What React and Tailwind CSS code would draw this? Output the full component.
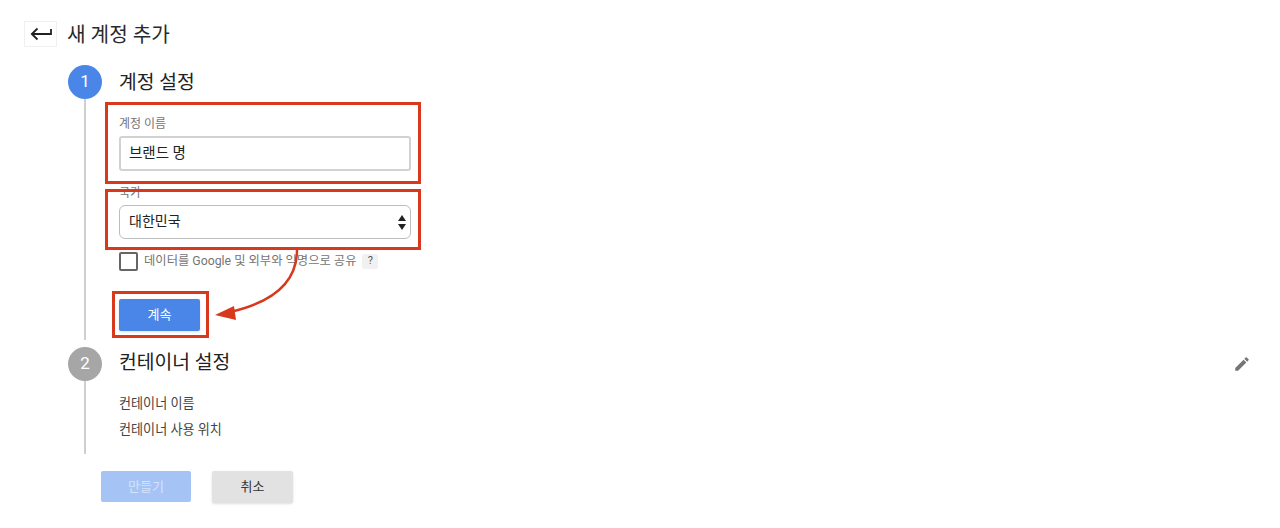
import React from 'react';

const font = "font-['Roboto','Noto_Sans_CJK_KR',sans-serif]";

const Annotations = () => (
  <>
    <div className="absolute left-[105px] top-[102px] w-[316px] h-[82px] border-[3px] border-[#d8391c]" />
    <div className="absolute left-[105px] top-[189px] w-[316px] h-[61px] border-[3px] border-[#d8391c]" />
    <div className="absolute left-[112px] top-[291px] w-[97px] h-[47px] border-[3px] border-[#d8391c]" />
    <svg className="absolute left-[210px] top-[248px]" width="95" height="76" viewBox="0 0 95 76" fill="none">
      <path d="M87 2 C87 34 64 54 20 64" stroke="#d8391c" strokeWidth="2.5" />
      <path d="M5 67 L24 58 L26 72 Z" fill="#d8391c" />
    </svg>
  </>
);

const App = () => (
  <div className={`relative w-[1280px] h-[528px] overflow-hidden bg-white ${font}`}>
    <header className="flex items-center pl-6 pt-[21px] h-[47px]">
      <button className="flex items-center justify-center w-[33px] h-[26px] border border-[#f0f0f0]">
        <svg width="22" height="14" viewBox="0 0 22 14" fill="none" stroke="#222" strokeWidth="1.8">
          <path d="M21 2 V7 H2" />
          <path d="M7.5 1.5 L1.8 7 L7.5 12.5" />
        </svg>
      </button>
      <h1 className="ml-[10px] mt-[2px] text-[20.2px] leading-[26px] text-[#2a2a2a]">새 계정 추가</h1>
    </header>

    <section className="flex pl-[68px] pt-[18px]">
      <div className="flex flex-col items-center w-[34px]">
        <div className="flex items-center justify-center shrink-0 w-[34px] h-[34px] rounded-full bg-[#4a86e8] text-[17px] text-white">1</div>
        <div className="w-[2px] h-[241px] bg-[#cfcfcf]" />
      </div>
      <div className="ml-[17px] w-[292px]">
        <h2 className="h-[34px] text-[19.3px] leading-[36px] text-[#222]">계정 설정</h2>
        <label className="block mt-[16px] text-[12px] leading-[18px] text-[#757575]">계정 이름</label>
        <div className="flex items-center mt-[3px] h-[35px] px-[8px] rounded-[3px] border-2 border-[#d2d2d2] text-[14.5px] text-[#222]">브랜드 명</div>
        <label className="block mt-[13px] text-[12px] leading-[18px] text-[#757575]">국가</label>
        <div className="flex items-center justify-between mt-[3px] h-[34px] pl-[9px] pr-[4px] rounded-[6px] border border-[#bdbdbd] text-[14px] text-[#222]">
          <span className="mb-[2px]">대한민국</span>
          <svg width="8" height="15" viewBox="0 0 8 15" fill="#222">
            <path d="M4 0 L8 6 H0 Z" />
            <path d="M4 15 L8 9 H0 Z" />
          </svg>
        </div>
        <div className="flex items-center mt-[13px] h-[19px]">
          <span className="w-[19px] h-[19px] rounded-[2px] border-2 border-[#666]" />
          <span className="ml-[6px] text-[12.3px] text-[#757575]">데이터를 Google 및 외부와 익명으로 공유</span>
          <span className="flex items-center justify-center ml-[6px] w-[16px] h-[15px] rounded-[2px] bg-[#f1f1f1] text-[11px] text-[#555]">?</span>
        </div>
        <button className="block mt-[28px] w-[81px] h-[32px] rounded-[2px] bg-[#4a86e8] text-[13px] text-white shadow-sm">계속</button>
      </div>
    </section>

    <section className="flex pl-[68px] pt-[7px]">
      <div className="flex flex-col items-center w-[34px]">
        <div className="flex items-center justify-center shrink-0 w-[34px] h-[34px] rounded-full bg-[#a6a6a6] text-[17px] text-white">2</div>
        <div className="w-[2px] h-[73px] bg-[#cfcfcf]" />
      </div>
      <div className="ml-[17px] flex-1">
        <div className="flex items-center justify-between h-[34px] pr-[29px]">
          <h2 className="mb-[2px] text-[19.3px] leading-[30px] text-[#222]">컨테이너 설정</h2>
          <svg width="18" height="18" viewBox="0 0 24 24" fill="#757575">
            <path d="M3 17.25V21h3.75L17.81 9.94l-3.75-3.75L3 17.25zM20.71 7.04a1 1 0 0 0 0-1.41l-2.34-2.34a1 1 0 0 0-1.41 0l-1.83 1.83 3.75 3.75 1.83-1.83z" />
          </svg>
        </div>
        <p className="mt-[14px] text-[13.1px] leading-[18px] text-[#444]">컨테이너 이름</p>
        <p className="mt-[8px] text-[13.1px] leading-[18px] text-[#444]">컨테이너 사용 위치</p>
      </div>
    </section>

    <footer className="flex pl-[101px] pt-[17px]">
      <button className="w-[90px] h-[31px] rounded-[2px] bg-[#a5c3f5] text-[13px] text-[#d5e3fb]">만들기</button>
      <button className="ml-[21px] w-[81px] h-[32px] rounded-[2px] bg-[#e2e2e2] text-[13px] text-[#333] shadow-sm">취소</button>
    </footer>

    <Annotations />
  </div>
);

export default App;
